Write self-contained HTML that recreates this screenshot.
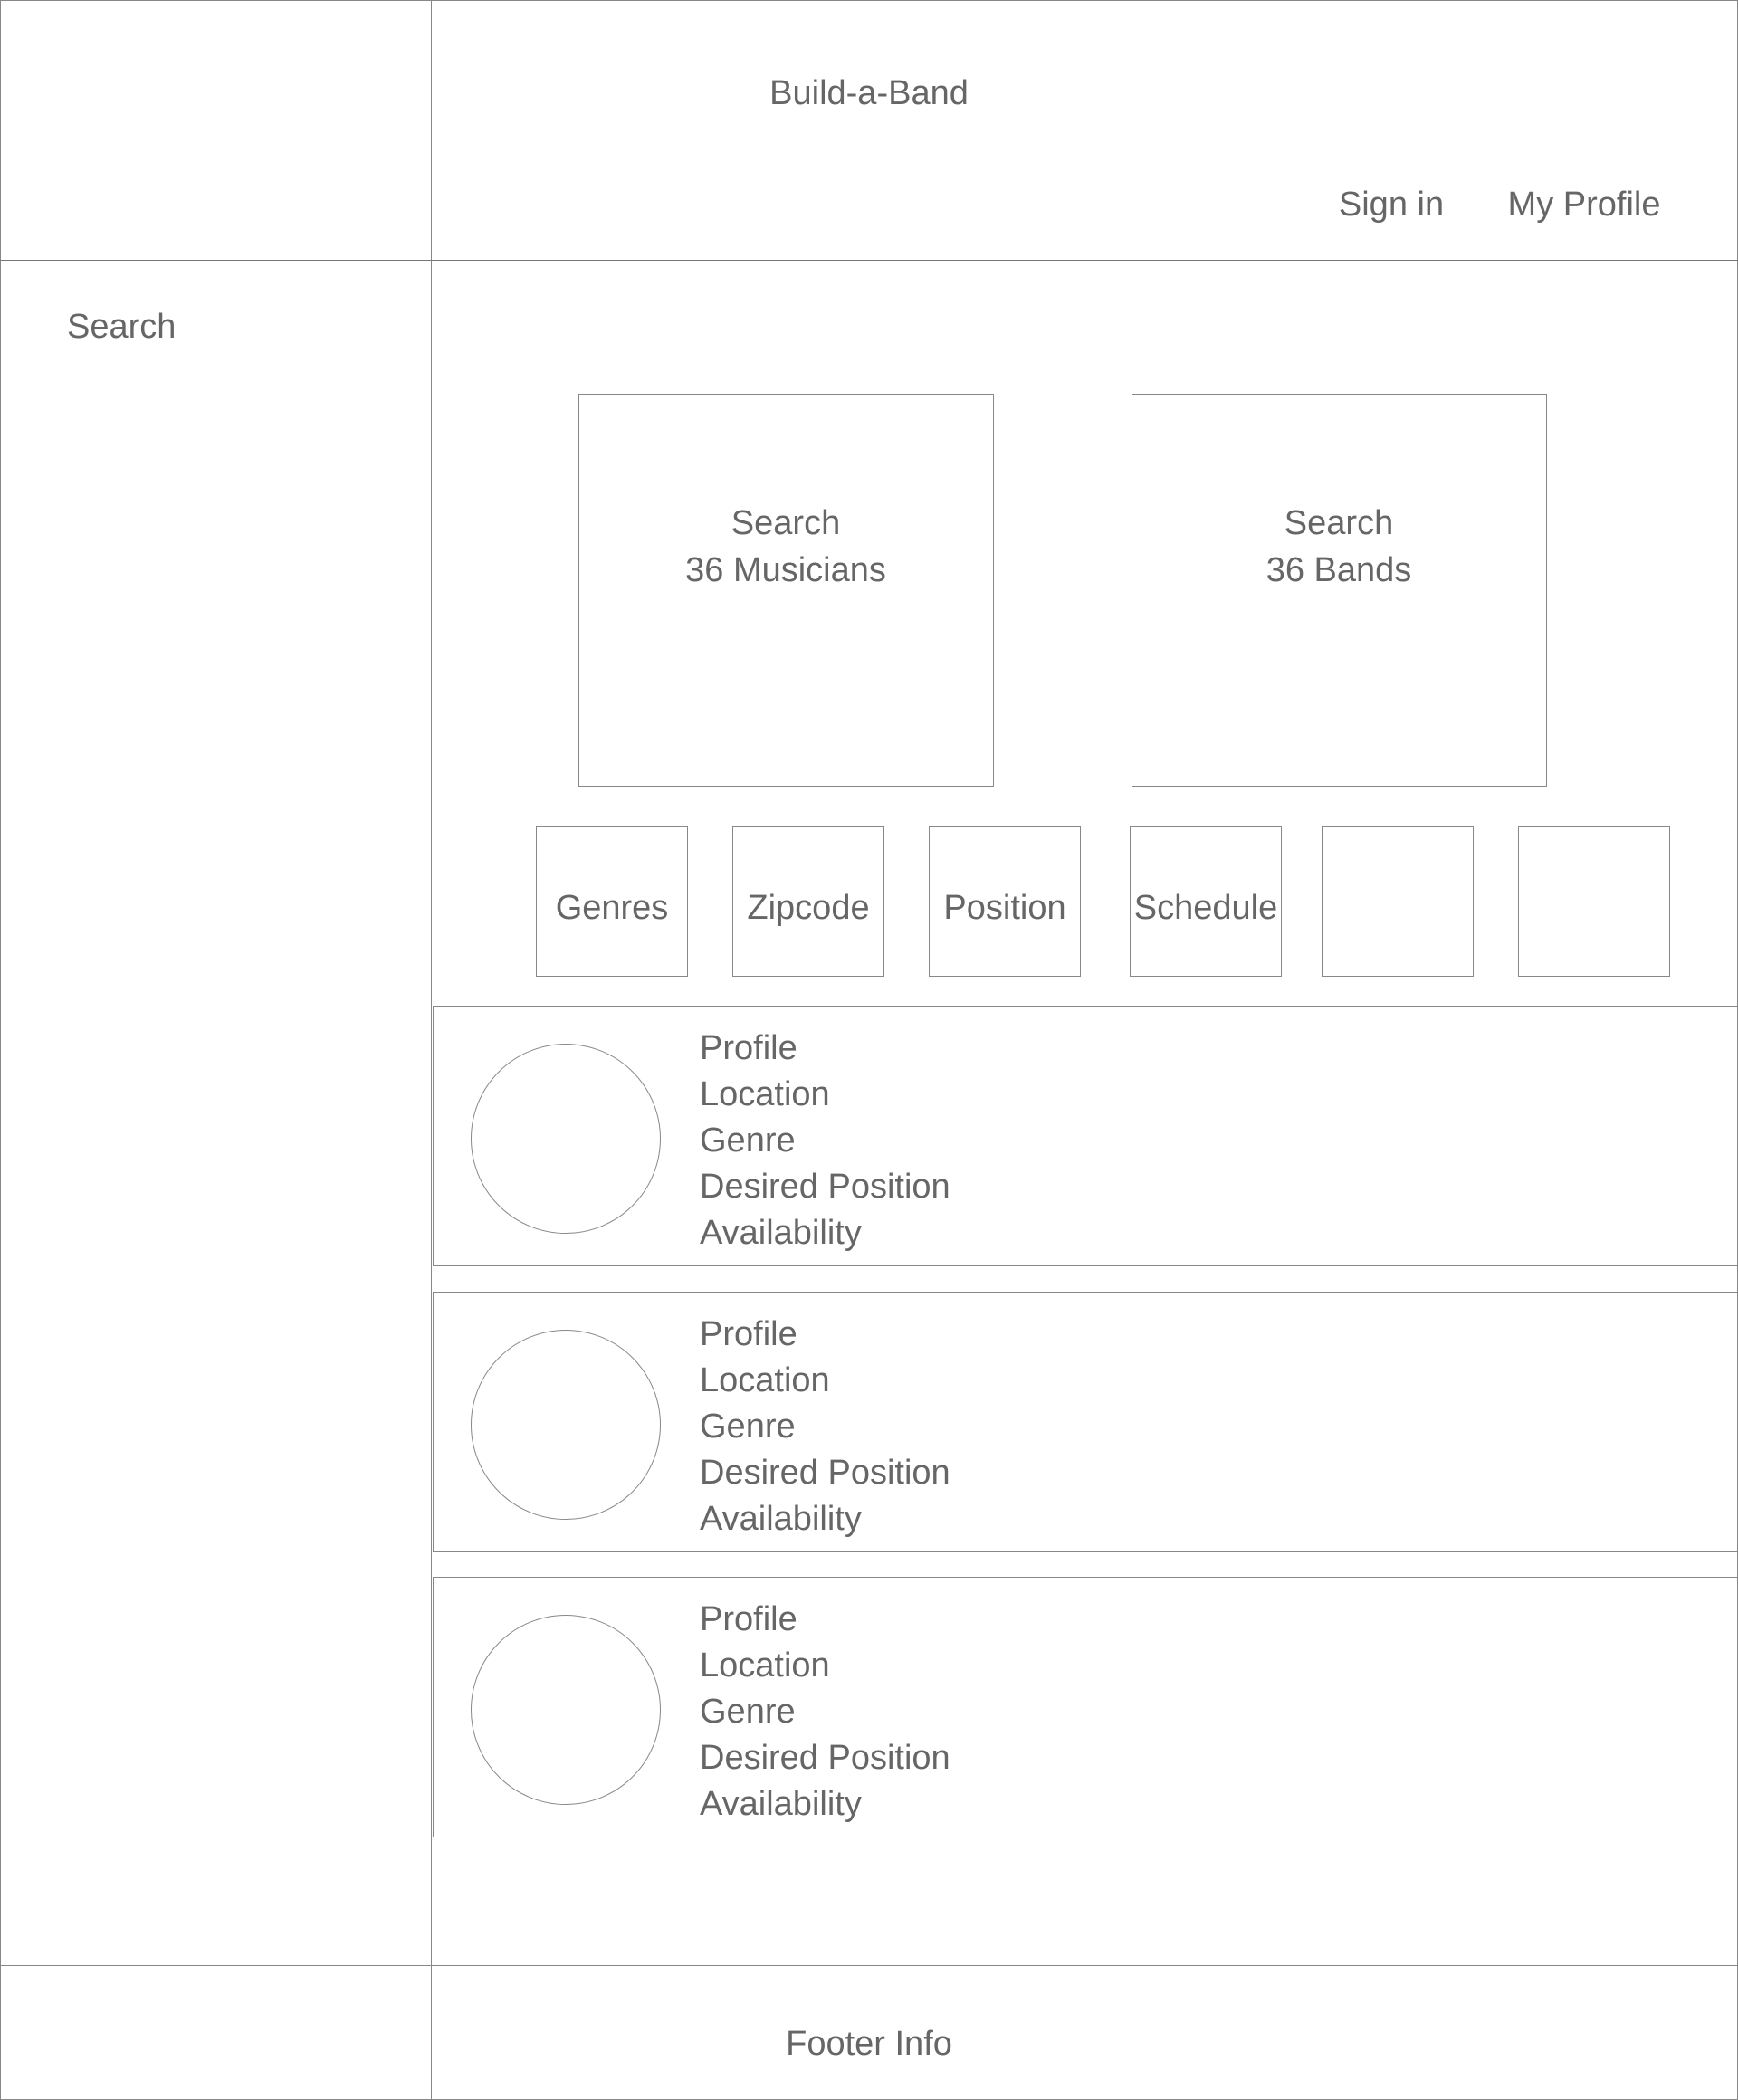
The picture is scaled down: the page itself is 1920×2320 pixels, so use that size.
<!DOCTYPE html>
<html><head><meta charset="utf-8"><style>
html,body{margin:0;padding:0;background:#fff;}
body{width:1920px;height:2320px;position:relative;overflow:hidden;font-family:"Liberation Sans",sans-serif;color:#666;font-size:38px;}
.b{position:absolute;border:1px solid #888;box-sizing:border-box;}
.t{position:absolute;white-space:nowrap;line-height:1;}
.c{transform:translate(-50%,-50%);}
.l{transform:translateY(-50%);}
.circ{position:absolute;width:210px;height:210px;border:1px solid #888;border-radius:50%;box-sizing:border-box;}
.row .t{left:294px;}
</style></head><body>
<div class="b" style="left:0;top:0;width:1920px;height:2320px;"></div>
<div style="position:absolute;left:476px;top:0;width:1px;height:2320px;background:#888"></div>
<div style="position:absolute;left:0;top:287px;width:1920px;height:1px;background:#777"></div>
<div style="position:absolute;left:0;top:2171px;width:1920px;height:1px;background:#888"></div>

<div class="t c" style="left:960px;top:103px;">Build-a-Band</div>
<div class="t c" style="left:1537px;top:226px;">Sign in</div>
<div class="t c" style="left:1750px;top:226px;">My Profile</div>
<div class="t l" style="left:74px;top:361px;">Search</div>

<div class="b" style="left:639px;top:435px;width:459px;height:434px;"></div>
<div class="t c" style="left:868px;top:578px;">Search</div>
<div class="t c" style="left:868px;top:630px;">36 Musicians</div>
<div class="b" style="left:1250px;top:435px;width:459px;height:434px;"></div>
<div class="t c" style="left:1479px;top:578px;">Search</div>
<div class="t c" style="left:1479px;top:630px;">36 Bands</div>

<div class="b" style="left:592px;top:913px;width:168px;height:166px;"></div>
<div class="t c" style="left:676px;top:1003px;">Genres</div>
<div class="b" style="left:809px;top:913px;width:168px;height:166px;"></div>
<div class="t c" style="left:893px;top:1003px;">Zipcode</div>
<div class="b" style="left:1026px;top:913px;width:168px;height:166px;"></div>
<div class="t c" style="left:1110px;top:1003px;">Position</div>
<div class="b" style="left:1248px;top:913px;width:168px;height:166px;"></div>
<div class="t c" style="left:1332px;top:1003px;">Schedule</div>
<div class="b" style="left:1460px;top:913px;width:168px;height:166px;"></div>
<div class="b" style="left:1677px;top:913px;width:168px;height:166px;"></div>

<div class="b row" style="left:478px;top:1111px;width:1442px;height:288px;">
<div class="circ" style="left:41px;top:41px;"></div>
<div class="t l" style="top:46px;">Profile</div>
<div class="t l" style="top:97px;">Location</div>
<div class="t l" style="top:148px;">Genre</div>
<div class="t l" style="top:199px;">Desired Position</div>
<div class="t l" style="top:250px;">Availability</div>
</div>
<div class="b row" style="left:478px;top:1427px;width:1442px;height:288px;">
<div class="circ" style="left:41px;top:41px;"></div>
<div class="t l" style="top:46px;">Profile</div>
<div class="t l" style="top:97px;">Location</div>
<div class="t l" style="top:148px;">Genre</div>
<div class="t l" style="top:199px;">Desired Position</div>
<div class="t l" style="top:250px;">Availability</div>
</div>
<div class="b row" style="left:478px;top:1742px;width:1442px;height:288px;">
<div class="circ" style="left:41px;top:41px;"></div>
<div class="t l" style="top:46px;">Profile</div>
<div class="t l" style="top:97px;">Location</div>
<div class="t l" style="top:148px;">Genre</div>
<div class="t l" style="top:199px;">Desired Position</div>
<div class="t l" style="top:250px;">Availability</div>
</div>

<div class="t c" style="left:960px;top:2258px;">Footer Info</div>
</body></html>
